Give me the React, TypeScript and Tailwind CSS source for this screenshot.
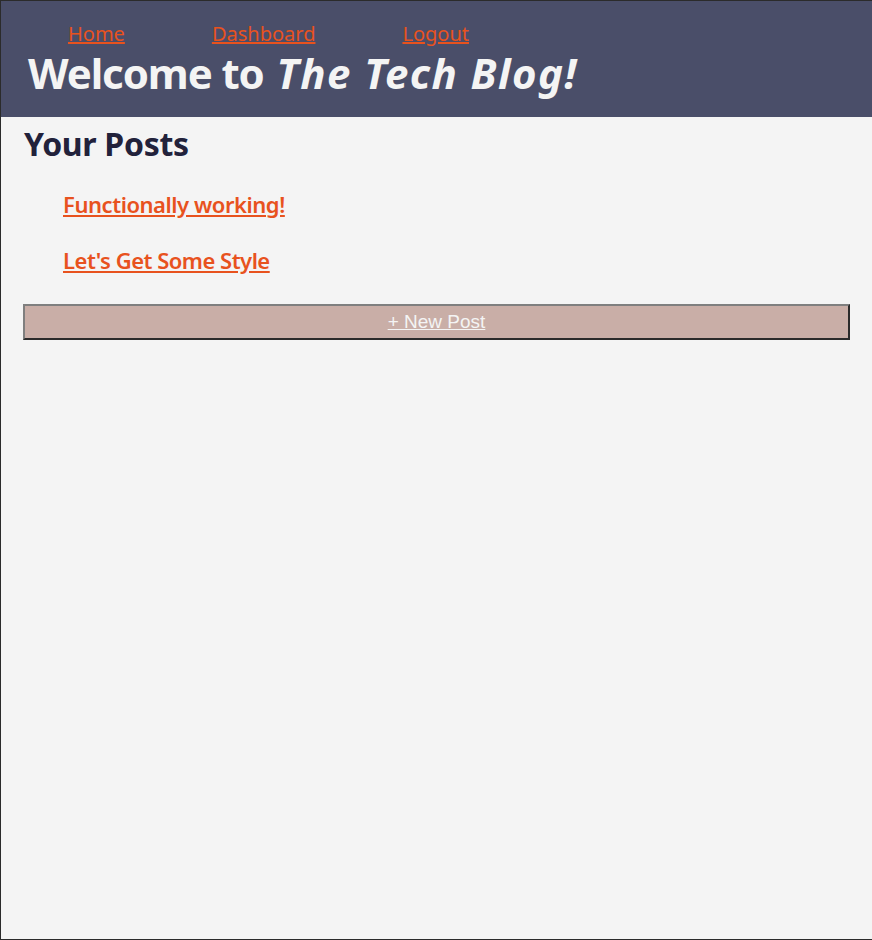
import React from "react";

export default function App() {
  return (
    <div
      className="h-[940px] box-border border-l border-t border-b border-[#2b2b2b] bg-[#f4f4f4] flex flex-col"
      style={{ fontFamily: '"Noto Sans", "DejaVu Sans", sans-serif' }}
    >
      <header className="h-[116px] bg-[#4a4e69] flex flex-col">
        <nav className="flex gap-[87px] pl-[67px] pt-[22px] text-[20px] leading-[22px]">
          <a href="#" className="text-[#e8521e] underline">Home</a>
          <a href="#" className="text-[#e8521e] underline">Dashboard</a>
          <a href="#" className="text-[#e8521e] underline">Logout</a>
        </nav>
        <h1 className="mt-[7px] pl-[27px] text-[42px] leading-[42px] font-bold text-[#f4f4f4]">
          <span className="tracking-[-1.1px]">Welcome to </span>
          <em className="ml-[3px] tracking-[1.4px]">The Tech Blog!</em>
        </h1>
      </header>
      <main className="flex flex-col px-[22px]">
        <h2 className="mt-[11px] pl-[1px] text-[32px] leading-[32px] font-bold tracking-[-0.3px] text-[#22223b]">Your Posts</h2>
        <ul className="flex flex-col pl-[40px] mt-[29px] gap-[26px]">
          <li className="text-[22px] leading-[30px] font-semibold tracking-[-0.45px]">
            <a href="#" className="text-[#e8521e] underline">Functionally working!</a>
          </li>
          <li className="text-[22px] leading-[30px] font-semibold tracking-[-0.5px]">
            <a href="#" className="text-[#e8521e] underline">Let's Get Some Style</a>
          </li>
        </ul>
        <button
          className="mt-[29px] h-[36px] w-full border-2 border-[#7f7f7f] border-r-[#2b2b2b] border-b-[#2b2b2b] bg-[#c9aea7] text-[#f4f4f4] text-[19px] underline"
          style={{ fontFamily: '"Liberation Sans", Arial, sans-serif' }}
        >
          + New Post
        </button>
      </main>
    </div>
  );
}
